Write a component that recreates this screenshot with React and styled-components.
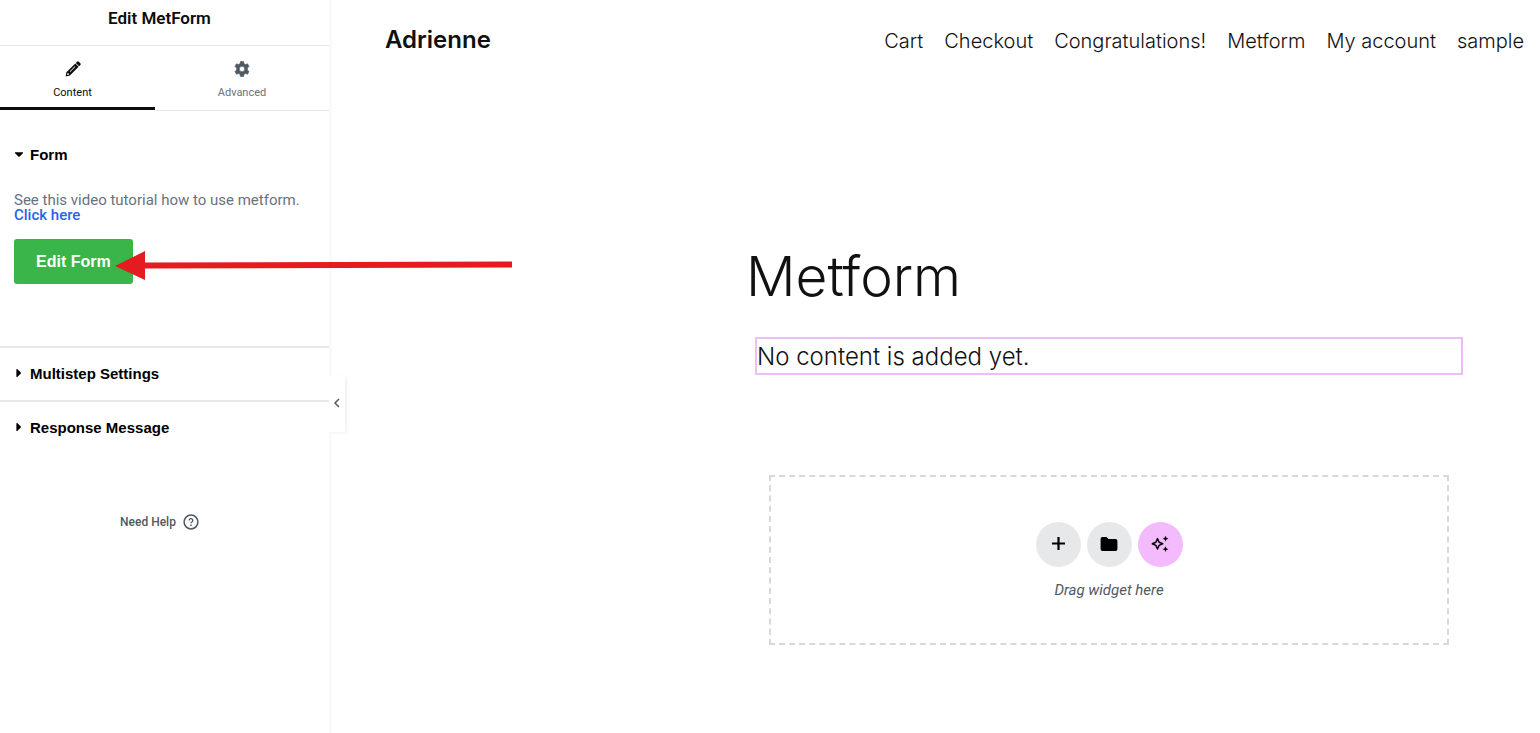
import React, { useState } from "react";
import styled, { createGlobalStyle } from "styled-components";
import { FaCaretDown, FaCaretRight } from "react-icons/fa";

const GlobalStyle = createGlobalStyle`
  * {
    box-sizing: border-box;
  }

  body {
    margin: 0;
    background: #fff;
    color: #0c0d0e;
    font-family: Roboto, sans-serif;
  }

  button {
    border: 0;
    padding: 0;
    background: none;
    color: inherit;
    font-family: inherit;
    cursor: pointer;
  }

  a {
    text-decoration: none;
  }
`;

const Editor = styled.div`
  display: flex;
  min-height: 100vh;
  position: relative;
`;

const Panel = styled.aside`
  flex: 0 0 332px;
  position: relative;
  border-right: 3px solid #fafafa;
`;

const PanelTitle = styled.h1`
  margin: 0;
  height: 46px;
  padding: 8px 10px 0 0;
  border-bottom: 1px solid #e6e8ea;
  text-align: center;
  font-size: 17px;
  line-height: 20px;
  font-weight: 600;
`;

const Tabs = styled.div`
  display: flex;
  height: 65px;
`;

const Tab = styled.button`
  flex: ${(props) => (props.$active ? "0 0 155px" : "1")};
  display: flex;
  flex-direction: column;
  align-items: center;
  gap: 8px;
  padding: ${(props) => (props.$active ? "15px 10px 0 0" : "15px 0 0")};
  border-bottom: ${(props) =>
    props.$active ? "3px solid #0c0d0e" : "1px solid #e6e8ea"};
  margin-bottom: ${(props) => (props.$active ? "1px" : "0")};
  color: ${(props) => (props.$active ? "#0c0d0e" : "#69727d")};
  font-size: 11px;
  line-height: 16px;

  svg {
    display: block;
    color: ${(props) => (props.$active ? "#0c0d0e" : "#515962")};
  }
`;

const Section = styled.section`
  border-top: ${(props) => (props.$first ? "0" : "2px solid #e6e8ea")};
  padding-top: ${(props) => (props.$first ? "18px" : "0")};
`;

const SectionToggle = styled.button`
  display: flex;
  align-items: center;
  width: 100%;
  height: 52px;
  padding: 0 0 2px 13px;
  color: #000;
  font-family: "Liberation Sans", Arial, sans-serif;
  font-size: 15px;
  font-weight: 700;
  text-align: left;

  svg {
    width: 12px;
    height: 14px;
    margin-right: 5px;
  }
`;

const SectionBody = styled.div`
  padding: 12px 14px 62px;
`;

const Note = styled.p`
  margin: 0 0 16px;
  color: #69727d;
  font-size: 15px;
  line-height: 15px;
`;

const NoteLink = styled.a`
  display: block;
  color: #2563eb;
  font-weight: 500;
`;

const EditButton = styled.button`
  height: 45px;
  padding: 0 22px;
  border-radius: 3px;
  background: #39b54a;
  color: #fff;
  font-family: "Liberation Sans", Arial, sans-serif;
  font-size: 16px;
  font-weight: 700;
`;

const HelpLink = styled.a`
  display: flex;
  justify-content: center;
  align-items: center;
  gap: 7px;
  padding: 60px 10px 0 0;
  color: #515962;
  font-size: 12px;
  line-height: 16px;
  font-weight: 500;
`;

const Collapse = styled.button`
  position: absolute;
  top: 376px;
  left: 100%;
  z-index: 1;
  width: 16px;
  height: 56px;
  padding-bottom: 2px;
  display: flex;
  align-items: center;
  justify-content: center;
  background: #fff;
  color: #515962;
  box-shadow: 2px 1px 3px rgba(0, 0, 0, 0.06);
`;

const Canvas = styled.main`
  flex: 1;
  min-width: 0;
  color: #111;
  font-family: Inter, sans-serif;
`;

const SiteHeader = styled.header`
  display: flex;
  justify-content: space-between;
  align-items: center;
  height: 80px;
  padding: 0 16px 0 53px;
`;

const SiteName = styled.a`
  color: #111;
  font-size: 24px;
  line-height: 32px;
  font-weight: 600;
`;

const SiteNav = styled.nav`
  display: flex;
  gap: 21px;
  padding-top: 2px;
`;

const NavLink = styled.a`
  color: #111;
  font-size: 20px;
  line-height: 32px;
  font-weight: 300;
  white-space: nowrap;
`;

const Article = styled.article`
  max-width: 794px;
  margin-left: auto;
  padding: 160px 70px 0 0;
`;

const PageTitle = styled.h2`
  margin: 0 0 25px;
  font-size: 55px;
  line-height: 72px;
  font-weight: 300;
`;

const Widget = styled.div`
  margin: 0 7px 0 9px;
  border: 2px solid #edbdf5;
  padding-top: 1px;
  font-size: 24px;
  line-height: 33px;
  font-weight: 300;
`;

const DropZone = styled.div`
  display: flex;
  flex-direction: column;
  align-items: center;
  gap: 14px;
  margin: 100px 21px 0 23px;
  height: 170px;
  padding-top: 45px;
  border: 2px dashed #d5d8dc;
  font-family: Roboto, sans-serif;
`;

const DropActions = styled.div`
  display: flex;
  gap: 6px;
`;

const RoundButton = styled.button`
  display: flex;
  align-items: center;
  justify-content: center;
  width: 45px;
  height: 45px;
  padding-bottom: 2px;
  border-radius: 50%;
  background: ${(props) => (props.$accent ? "#f3bafd" : "#e6e8ea")};
  color: #000;
`;

const DropHint = styled.div`
  color: #515962;
  font-size: 15px;
  line-height: 18px;
  font-style: italic;
`;

const Pointer = styled.svg`
  position: absolute;
  top: 250px;
  left: 115px;
  pointer-events: none;
`;

const PencilIcon = () => (
  <svg width="16" height="16" viewBox="0 0 16 16" fill="currentColor">
    <path d="M12 .8a1.300 1.300 0 0 1 1.800 0l1.500 1.500a1.300 1.300 0 0 1 0 1.800l-1.200 1.200-3.300-3.300z" />
    <path
      fillRule="evenodd"
      d="M10.300 2.500 13.600 5.800 4.900 14.600.7 15.400 1.400 11.300zM2.500 12l-.4 2 2-.4-.3-1.200zM9.800 5.300 4.700 10.400l.5.5 5.100-5.100z"
    />
  </svg>
);

const GearIcon = () => (
  <svg width="16" height="16" viewBox="0 0 16 16" fill="currentColor">
    <path
      stroke="currentColor"
      strokeWidth=".6"
      strokeLinejoin="round"
      fillRule="evenodd"
      d="M6.400.5h3.200l.4 2.200 1.300.8 2.200-.7 1.500 2.600-1.600 1.600v2l1.600 1.600-1.500 2.600-2.200-.7-1.300.8-.4 2.200H6.400L6 13.300l-1.300-.8-2.200.7L1 10.600 2.600 9V7L1 5.400l1.500-2.600 2.200.7L6 2.700zM8 5.300a2.700 2.700 0 1 0 0 5.400 2.700 2.700 0 0 0 0-5.400z"
    />
  </svg>
);

const HelpIcon = () => (
  <svg width="16" height="16" viewBox="0 0 16 16" fill="none" stroke="currentColor">
    <circle cx="8" cy="8" r="6.900" strokeWidth="1.500" />
    <path d="M6.200 6.500a1.800 1.800 0 1 1 2.700 1.500c-.7.400-.9.700-.9 1.300" strokeWidth="1.400" />
    <path d="M8 10.500v1.400" strokeWidth="1.500" />
  </svg>
);

const ChevronIcon = () => (
  <svg width="8" height="10" viewBox="0 0 8 10" fill="none" stroke="currentColor">
    <path d="M6 1 2 5l4 4" strokeWidth="1.500" />
  </svg>
);

const PlusIcon = () => (
  <svg width="15" height="15" viewBox="0 0 15 15" stroke="currentColor">
    <path d="M7.500 1v13M1 7.500h13" strokeWidth="2.200" />
  </svg>
);

const FolderIcon = () => (
  <svg width="18" height="16" viewBox="0 0 18 16" fill="currentColor">
    <path d="M2.500 1h4l2 2h7A1.900 1.900 0 0 1 17.400 5v8a1.900 1.900 0 0 1-1.900 2h-13A1.900 1.900 0 0 1 .6 13V3a1.900 1.900 0 0 1 1.900-2z" />
  </svg>
);

const SparkIcon = () => (
  <svg width="18" height="18" viewBox="0 0 18 18" fill="currentColor">
    <path
      d="M6.500 3.600 8.100 7.200 11.700 8.800 8.100 10.400 6.500 14 4.900 10.400 1.300 8.800 4.900 7.200z"
      fill="none"
      stroke="currentColor"
      strokeWidth="1.500"
      strokeLinejoin="round"
    />
    <path d="m14.500.8.9 2 2 .9-2 .9-.9 2-.9-2-2-.9 2-.9zM14.500 11.300l.9 2 2 .9-2 .9-.9 2-.9-2-2-.9 2-.9z" />
  </svg>
);

const pages = ["Cart", "Checkout", "Congratulations!", "Metform", "My account", "sample"];

const PanelSection = ({ title, first, children }) => {
  const [open, setOpen] = useState(Boolean(first));

  return (
    <Section $first={first}>
      <SectionToggle aria-expanded={open} onClick={() => setOpen(!open)}>
        {open ? <FaCaretDown /> : <FaCaretRight />}
        {title}
      </SectionToggle>
      {open && children}
    </Section>
  );
};

const App = () => {
  return (
    <>
      <GlobalStyle />
      <Editor>
        <Panel>
          <PanelTitle>Edit MetForm</PanelTitle>
          <Tabs role="tablist">
            <Tab role="tab" aria-selected="true" $active>
              <PencilIcon />
              Content
            </Tab>
            <Tab role="tab" aria-selected="false">
              <GearIcon />
              Advanced
            </Tab>
          </Tabs>
          <PanelSection title="Form" first>
            <SectionBody>
              <Note>
                See this video tutorial how to use metform.
                <NoteLink href="#">Click here</NoteLink>
              </Note>
              <EditButton>Edit Form</EditButton>
            </SectionBody>
          </PanelSection>
          <PanelSection title="Multistep Settings" />
          <PanelSection title="Response Message" />
          <HelpLink href="#">
            Need Help
            <HelpIcon />
          </HelpLink>
          <Collapse aria-label="Hide panel">
            <ChevronIcon />
          </Collapse>
        </Panel>

        <Canvas>
          <SiteHeader>
            <SiteName href="#">Adrienne</SiteName>
            <SiteNav>
              {pages.map((page) => (
                <NavLink href="#" key={page}>
                  {page}
                </NavLink>
              ))}
            </SiteNav>
          </SiteHeader>
          <Article>
            <PageTitle>Metform</PageTitle>
            <Widget>No content is added yet.</Widget>
            <DropZone>
              <DropActions>
                <RoundButton aria-label="Add element">
                  <PlusIcon />
                </RoundButton>
                <RoundButton aria-label="Add template">
                  <FolderIcon />
                </RoundButton>
                <RoundButton aria-label="Build with AI" $accent>
                  <SparkIcon />
                </RoundButton>
              </DropActions>
              <DropHint>Drag widget here</DropHint>
            </DropZone>
          </Article>
        </Canvas>

        <Pointer width="398" height="32" viewBox="0 0 398 32" fill="#e61b1f" aria-hidden="true">
          <path d="M0 16 30 1v11.500l367-1v6l-367 1V30z" />
        </Pointer>
      </Editor>
    </>
  );
};

export default App;
